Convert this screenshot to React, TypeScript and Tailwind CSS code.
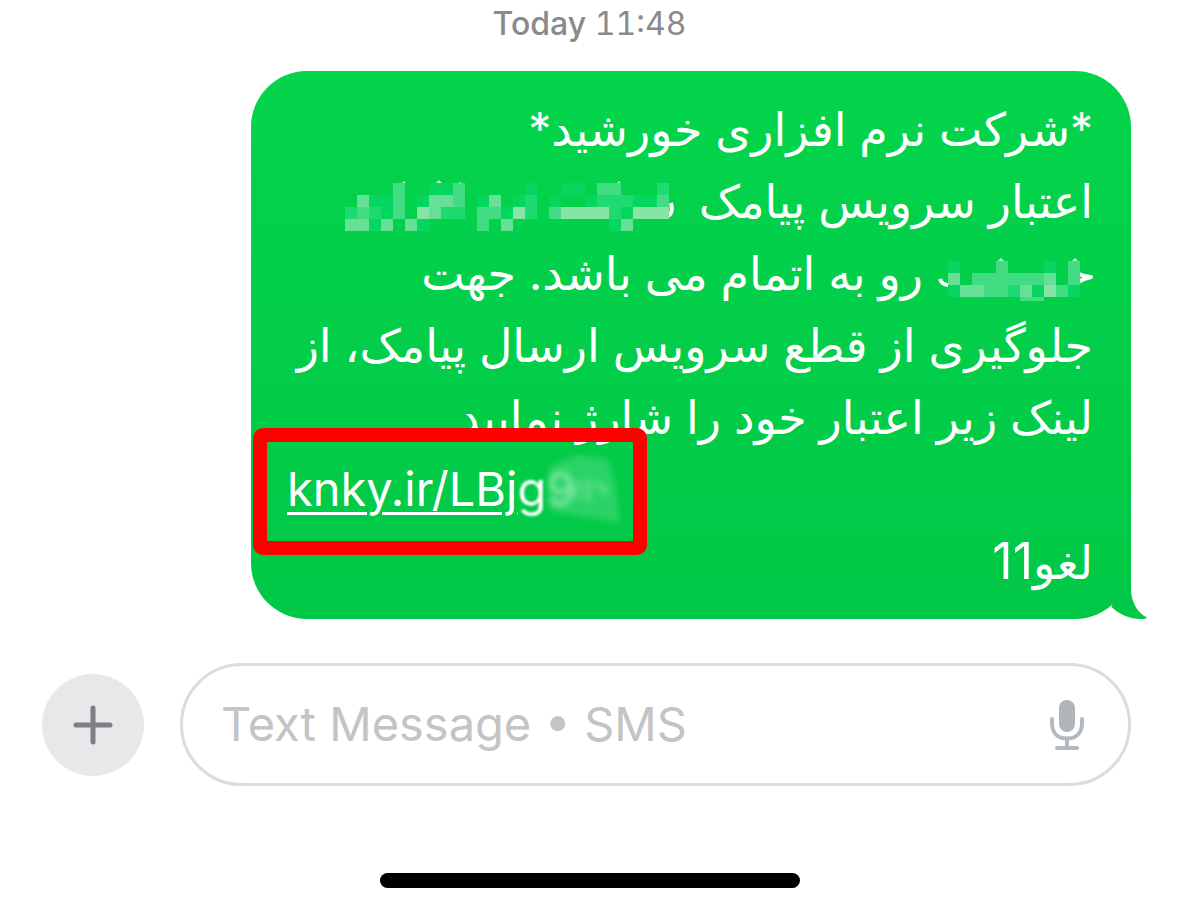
import { Fragment } from "react";

const SHADES: Record<string, string> = {
  a: "#05d660",
  b: "#1fda70",
  c: "#42dc82",
  d: "#66e096",
  e: "#86e4a4",
};

const CELL = 12;

const NAME_START = [
  "....c..aac.....a..aa.cc...b",
  ".daac.addc.ad.ab.a..abbbaac",
  "bcbac.edbb.ccaeb.ceeeebaeee",
  "ddad.da....c.d........ad...",
];

const NAME_END = [
  "a...c...a.c",
  "d.ccccccd.c",
  "addccbdaeca",
];

function Mosaic({ rows }: { rows: string[] }) {
  return (
    <>
      {rows.map((row, y) => (
        <Fragment key={y}>
          {row.split("").map((shade, x) =>
            shade === "." ? null : (
              <rect
                key={x}
                x={x * CELL}
                y={y * CELL}
                width={CELL}
                height={CELL}
                fill={SHADES[shade]}
                shapeRendering="crispEdges"
              />
            )
          )}
        </Fragment>
      ))}
    </>
  );
}

function BubbleTail() {
  return (
    <svg
      className="absolute -right-4 bottom-0 h-[60px] w-[56px]"
      viewBox="0 0 56 60"
      fill="#00c846"
      aria-hidden="true"
    >
      <path d="M30 20L40 0V30C40 42 46 54 56 58.500C55 59.500 53 60 50 60C39 60 29 56 20.500 48Z" />
    </svg>
  );
}

function MicIcon() {
  return (
    <svg width="36" height="52" viewBox="0 0 36 52" fill="none" aria-hidden="true">
      <rect x="10" y="1" width="16" height="32" rx="8" fill="#aeb6bc" />
      <path
        d="M3 20V24C3 34 9 39.500 18 39.500S33 34 33 24V20M18 40V48M8 49H28"
        stroke="#b4b9be"
        strokeWidth="4"
        strokeLinecap="round"
      />
    </svg>
  );
}

function Message() {
  return (
    <article
      dir="rtl"
      className="relative ml-auto w-full max-w-[880px] rounded-[56px] bg-linear-to-b from-[#04d44c] to-[#00c846] pt-[22px] pr-[38px] pb-[23px] pl-9 text-[46px] leading-[72px] whitespace-nowrap text-white"
    >
      <p>*شرکت نرم افزاری خورشید*</p>
      <p className="flex items-center">
        <span>اعتبار سرویس پیامک</span>
        <svg
          className="mr-6 overflow-visible"
          width="330"
          height="50"
          viewBox="0 0 330 50"
          role="img"
          aria-label="Hidden name"
        >
          <g transform="translate(0 7)">
            <path d="M326 20Q329 32 321 33" stroke="white" strokeWidth="4" fill="none" />
            <path d="M55 1L60 -2V1ZM90 1L94 -3L98 1ZM110 1L116 -1V1ZM270 1L275 -2V1Z" fill="#c8f5d4" />
            <Mosaic rows={NAME_START} />
          </g>
        </svg>
      </p>
      <p className="flex items-center">
        <svg
          className="overflow-visible"
          width="154"
          height="46"
          viewBox="0 0 154 46"
          role="img"
          aria-label="Hidden name"
        >
          <g transform="translate(9 11)">
            <path d="M131 13Q137 16 143 16Q137 17 130 21" stroke="white" strokeWidth="4" strokeLinejoin="round" fill="none" />
            <path d="M-8 18Q-6 25 4 24" stroke="white" strokeWidth="4" fill="none" />
            <path d="M49 1L53 -3L57 1ZM123 1L127 -3L131 1Z" fill="#c8f5d4" />
            <Mosaic rows={NAME_END} />
            <rect x="72" y="36" width="24" height="4" fill="#42dc82" />
          </g>
        </svg>
        <span className="mr-4">رو به اتمام می باشد. جهت</span>
      </p>
      <p>جلوگیری از قطع سرویس ارسال پیامک، از</p>
      <p>لینک زیر اعتبار خود را شارژ نمایید</p>
      <p dir="ltr" className="relative text-[47px]">
        <a
          href="#link"
          className="underline decoration-[3px] underline-offset-[6px]"
        >
          knky.ir/LBj
          <span className="inline-block underline blur-[1px]">g</span>
          <span className="inline-block opacity-50 blur-[3px]">9</span>
        </a>
        <svg
          className="absolute top-0 left-[250px] h-[72px] w-[90px] overflow-visible blur-[3px]"
          viewBox="0 0 90 72"
          aria-hidden="true"
        >
          <path d="M12 14L40 2L70 6Q82 36 82 70L12 58Z" fill="white" opacity="0.17" />
          <path d="M42 28L38 46M52 26L50 48M60 30L70 40" stroke="white" strokeWidth="7" opacity="0.2" />
        </svg>
        <span className="absolute -top-[25px] -left-[34px] h-[127px] w-[394px] rounded-[10px] border-[14px] border-[#ff0000]" />
      </p>
      <p className="h-[71px]">
        لغو<span className="text-[50px]">11</span>
      </p>
      <BubbleTail />
    </article>
  );
}

export default function App() {
  return (
    <main className="flex min-h-screen flex-col bg-white font-['Inter','DejaVu_Sans',sans-serif]">
      <h1 className="pt-1 text-center text-[32px] leading-10 font-normal text-[#8a8a8c] tabular-nums">
        <span className="font-medium">Today</span> 11:48
      </h1>

      <section className="mt-[27px] pr-12 pl-9">
        <Message />
      </section>

      <form
        className="mt-11 flex items-center gap-9 pr-12 pl-[42px]"
        onSubmit={(e) => e.preventDefault()}
      >
        <button
          type="button"
          aria-label="Add attachment"
          className="flex size-[102px] shrink-0 items-center justify-center rounded-full bg-[#e8e8eb]"
        >
          <svg width="40" height="40" viewBox="0 0 40 40" aria-hidden="true">
            <path d="M20 3V37M3 20H37" stroke="#7e7e84" strokeWidth="5" strokeLinecap="round" />
          </svg>
        </button>
        <div className="flex h-[123px] min-w-0 flex-1 items-center rounded-full border-[3px] border-[#dcdcde] pr-[43px] pl-[38px]">
          <input
            type="text"
            aria-label="Text message"
            placeholder="Text Message • SMS"
            className="min-w-0 flex-1 bg-transparent text-[47px] text-black outline-none placeholder:text-[#c4c4c6]"
          />
          <button type="button" aria-label="Dictate">
            <MicIcon />
          </button>
        </div>
      </form>

      <div className="mx-auto mt-auto mb-6 h-[15px] w-[420px] rounded-full bg-black" />
    </main>
  );
}
